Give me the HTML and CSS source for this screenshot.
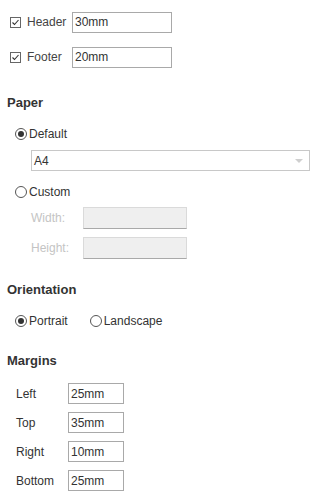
FILE: index.html
```html
<!DOCTYPE html>
<html lang="en">
<head>
    <meta charset="UTF-8">
    <title>Page Setup</title>
    <link rel="stylesheet" href="styles.css">
</head>
<body>
    <div class="panel">
        <div class="hf">
            <div class="hf-row">
                <span class="check"><svg width="11" height="11" viewBox="0 0 11 11"><rect x="0.5" y="0.5" width="10" height="10" fill="#fff" stroke="#666"/><path d="M2.5 5.5 L4.5 7.5 L8.5 3" fill="none" stroke="#333" stroke-width="1.1"/></svg></span>
                <label class="hf-label">Header</label>
                <input class="field" type="text" value="30mm">
            </div>
            <div class="hf-row">
                <span class="check"><svg width="11" height="11" viewBox="0 0 11 11"><rect x="0.5" y="0.5" width="10" height="10" fill="#fff" stroke="#666"/><path d="M2.5 5.5 L4.5 7.5 L8.5 3" fill="none" stroke="#333" stroke-width="1.1"/></svg></span>
                <label class="hf-label">Footer</label>
                <input class="field" type="text" value="20mm">
            </div>
        </div>

        <h3 class="heading paper-heading">Paper</h3>
        <div class="radio-row">
            <span class="radio checked"></span><span>Default</span>
        </div>
        <div class="select">
            <span>A4</span>
            <span class="caret"></span>
        </div>
        <div class="radio-row custom-row">
            <span class="radio"></span><span>Custom</span>
        </div>
        <div class="size-row">
            <label class="size-label">Width:</label>
            <input class="field disabled" type="text" disabled>
        </div>
        <div class="size-row">
            <label class="size-label">Height:</label>
            <input class="field disabled" type="text" disabled>
        </div>

        <h3 class="heading orient-heading">Orientation</h3>
        <div class="orient">
            <div class="radio-row inline">
                <span class="radio checked"></span><span>Portrait</span>
            </div>
            <div class="radio-row inline">
                <span class="radio"></span><span>Landscape</span>
            </div>
        </div>

        <h3 class="heading margins-heading">Margins</h3>
        <div class="margins">
            <div class="margin-row"><label>Left</label><input class="field small" type="text" value="25mm"></div>
            <div class="margin-row"><label>Top</label><input class="field small" type="text" value="35mm"></div>
            <div class="margin-row"><label>Right</label><input class="field small" type="text" value="10mm"></div>
            <div class="margin-row"><label>Bottom</label><input class="field small" type="text" value="25mm"></div>
        </div>
    </div>
</body>
</html>
```

FILE: styles.css
```css
body {
    margin: 0;
    font-family: "Liberation Sans", Arial, sans-serif;
    font-size: 12px;
    color: #333;
    background: #fff;
}

.panel {
    padding: 11px 0 0 0;
}

.hf {
    padding-left: 10px;
}

.hf-row {
    display: flex;
    align-items: center;
    height: 22px;
    margin-bottom: 13px;
}

.check {
    display: flex;
    flex: none;
    width: 11px;
    height: 11px;
}

.hf-label {
    flex: none;
    width: 51px;
    padding-left: 6px;
    box-sizing: border-box;
    color: #444;
}

.field {
    flex: none;
    box-sizing: border-box;
    width: 100px;
    height: 21px;
    margin: 0;
    padding: 0 2px;
    border: 1px solid #a9a9a9;
    font-family: "Liberation Sans", Arial, sans-serif;
    font-size: 12px;
    color: #333;
    outline: none;
}

.heading {
    margin: 0;
    padding-left: 7px;
    font-size: 13px;
    font-weight: bold;
    line-height: 16px;
    color: #333;
}

.paper-heading {
    margin-top: 27px;
}

.radio-row {
    display: flex;
    align-items: center;
    height: 16px;
    padding-left: 15px;
}

.radio {
    flex: none;
    box-sizing: border-box;
    width: 12px;
    height: 12px;
    margin-right: 2px;
    border: 1px solid #555;
    border-radius: 50%;
    position: relative;
}

.radio.checked::after {
    content: "";
    position: absolute;
    left: 2px;
    top: 2px;
    width: 6px;
    height: 6px;
    border-radius: 50%;
    background: #333;
}

.paper-heading + .radio-row {
    margin-top: 15px;
}

.select {
    display: flex;
    align-items: center;
    justify-content: space-between;
    box-sizing: border-box;
    width: 279px;
    height: 21px;
    margin: 8px 0 0 31px;
    padding: 0 6px 0 2px;
    border: 1px solid #c8c8c8;
}

.caret {
    width: 0;
    height: 0;
    margin-top: 1px;
    border-left: 4px solid transparent;
    border-right: 4px solid transparent;
    border-top: 4px solid #cfcfcf;
}

.custom-row {
    margin-top: 13px;
}

.size-row {
    display: flex;
    align-items: center;
    padding-left: 31px;
    margin-top: 7px;
}

.size-row + .size-row {
    margin-top: 8px;
}

.size-label {
    flex: none;
    width: 52px;
    color: #c4c4c4;
}

.field.disabled {
    width: 104px;
    height: 22px;
    background: #efefef;
    border: 1px solid #dadada;
    border-bottom-color: #a9a9a9;
}

.orient-heading {
    margin-top: 23px;
}

.orient {
    display: flex;
    margin-top: 15px;
}

.radio-row.inline {
    padding-left: 15px;
}

.radio-row.inline + .radio-row.inline {
    padding-left: 22px;
}

.margins-heading {
    margin-top: 24px;
}

.margins {
    padding: 14px 0 0 16px;
}

.margin-row {
    display: flex;
    align-items: center;
    margin-bottom: 8px;
}

.margin-row label {
    flex: none;
    width: 52px;
}

.field.small {
    width: 56px;
}
```
